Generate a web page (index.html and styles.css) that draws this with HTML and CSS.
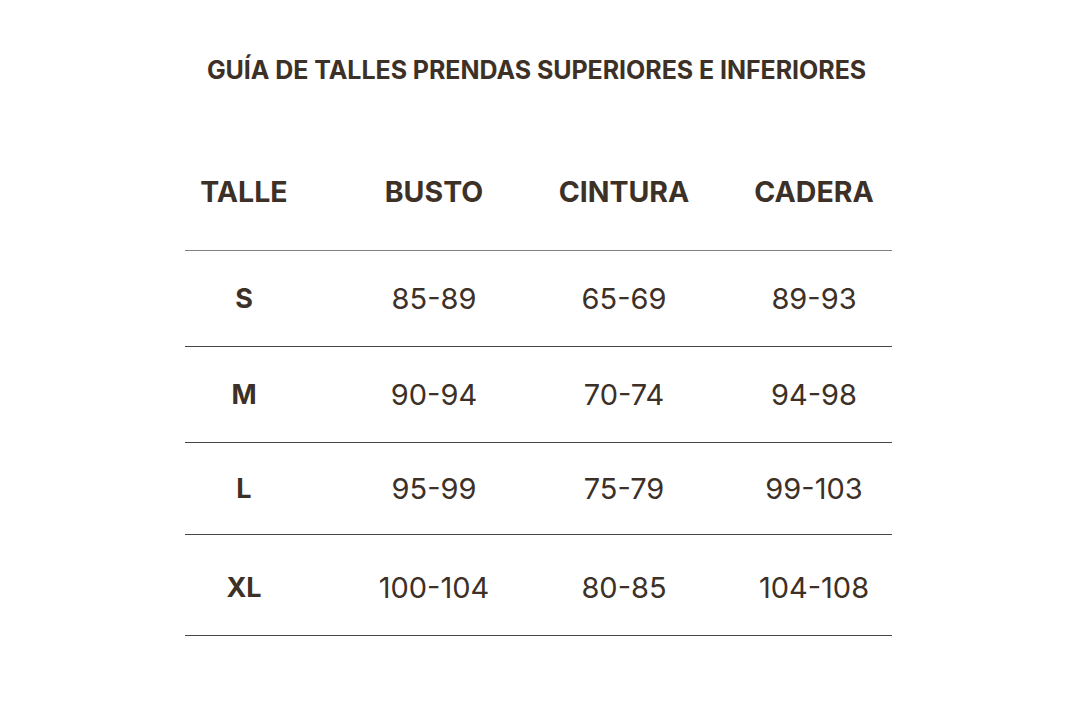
FILE: index.html
```html
<!DOCTYPE html>
<html lang="es">
<head>
<meta charset="utf-8">
<title>Guía de talles</title>
<link rel="stylesheet" href="styles.css">
</head>
<body>
<main class="page">
  <h1 class="title">GUÍA DE TALLES PRENDAS SUPERIORES E INFERIORES</h1>
  <div class="table">
    <div class="row row--head">
      <div class="cells">
        <div class="cell">TALLE</div>
        <div class="cell">BUSTO</div>
        <div class="cell">CINTURA</div>
        <div class="cell">CADERA</div>
      </div>
    </div>
    <div class="row">
      <div class="cells">
        <div class="cell cell--size">S</div>
        <div class="cell">85-89</div>
        <div class="cell">65-69</div>
        <div class="cell">89-93</div>
      </div>
    </div>
    <div class="row">
      <div class="cells">
        <div class="cell cell--size">M</div>
        <div class="cell">90-94</div>
        <div class="cell">70-74</div>
        <div class="cell">94-98</div>
      </div>
    </div>
    <div class="row row--short">
      <div class="cells">
        <div class="cell cell--size">L</div>
        <div class="cell">95-99</div>
        <div class="cell">75-79</div>
        <div class="cell">99-103</div>
      </div>
    </div>
    <div class="row row--tall">
      <div class="cells">
        <div class="cell cell--size">XL</div>
        <div class="cell">100-104</div>
        <div class="cell">80-85</div>
        <div class="cell">104-108</div>
      </div>
    </div>
  </div>
</main>
</body>
</html>
```

FILE: styles.css
```css
html, body {
  margin: 0;
  padding: 0;
  background: #ffffff;
}

body {
  font-family: Inter, "Noto Sans", sans-serif;
  color: #3d3027;
  width: 1080px;
  height: 708px;
  overflow: hidden;
}

.page {
  display: flex;
  flex-direction: column;
}

.title {
  margin: 56px 0 0 0;
  font-size: 25px;
  font-weight: 700;
  line-height: 28px;
  letter-spacing: -0.05px;
  text-align: center;
  width: 1073px;
}

.table {
  width: 707px;
  margin: 45px 0 0 185px;
}

.row {
  display: flex;
  align-items: center;
  width: 707px;
  height: 96px;
  padding-top: 2px;
  border-bottom: 1px solid #4a4442;
  box-sizing: border-box;
  font-size: 29px;
  font-weight: 400;
}

.cells {
  display: grid;
  grid-template-columns: repeat(4, 190px);
  margin-left: -36px;
  flex: none;
}

.row--head {
  height: 122px;
  padding-top: 6px;
  border-bottom-color: #85807d;
  font-size: 28.5px;
  font-weight: 700;
}

.row--short {
  height: 92px;
}

.row--tall {
  height: 101px;
  padding-top: 7px;
}

.cell {
  text-align: center;
  line-height: 34px;
  padding-bottom: 2px;
}

.cell--size {
  font-weight: 700;
  font-size: 27px;
}
```
